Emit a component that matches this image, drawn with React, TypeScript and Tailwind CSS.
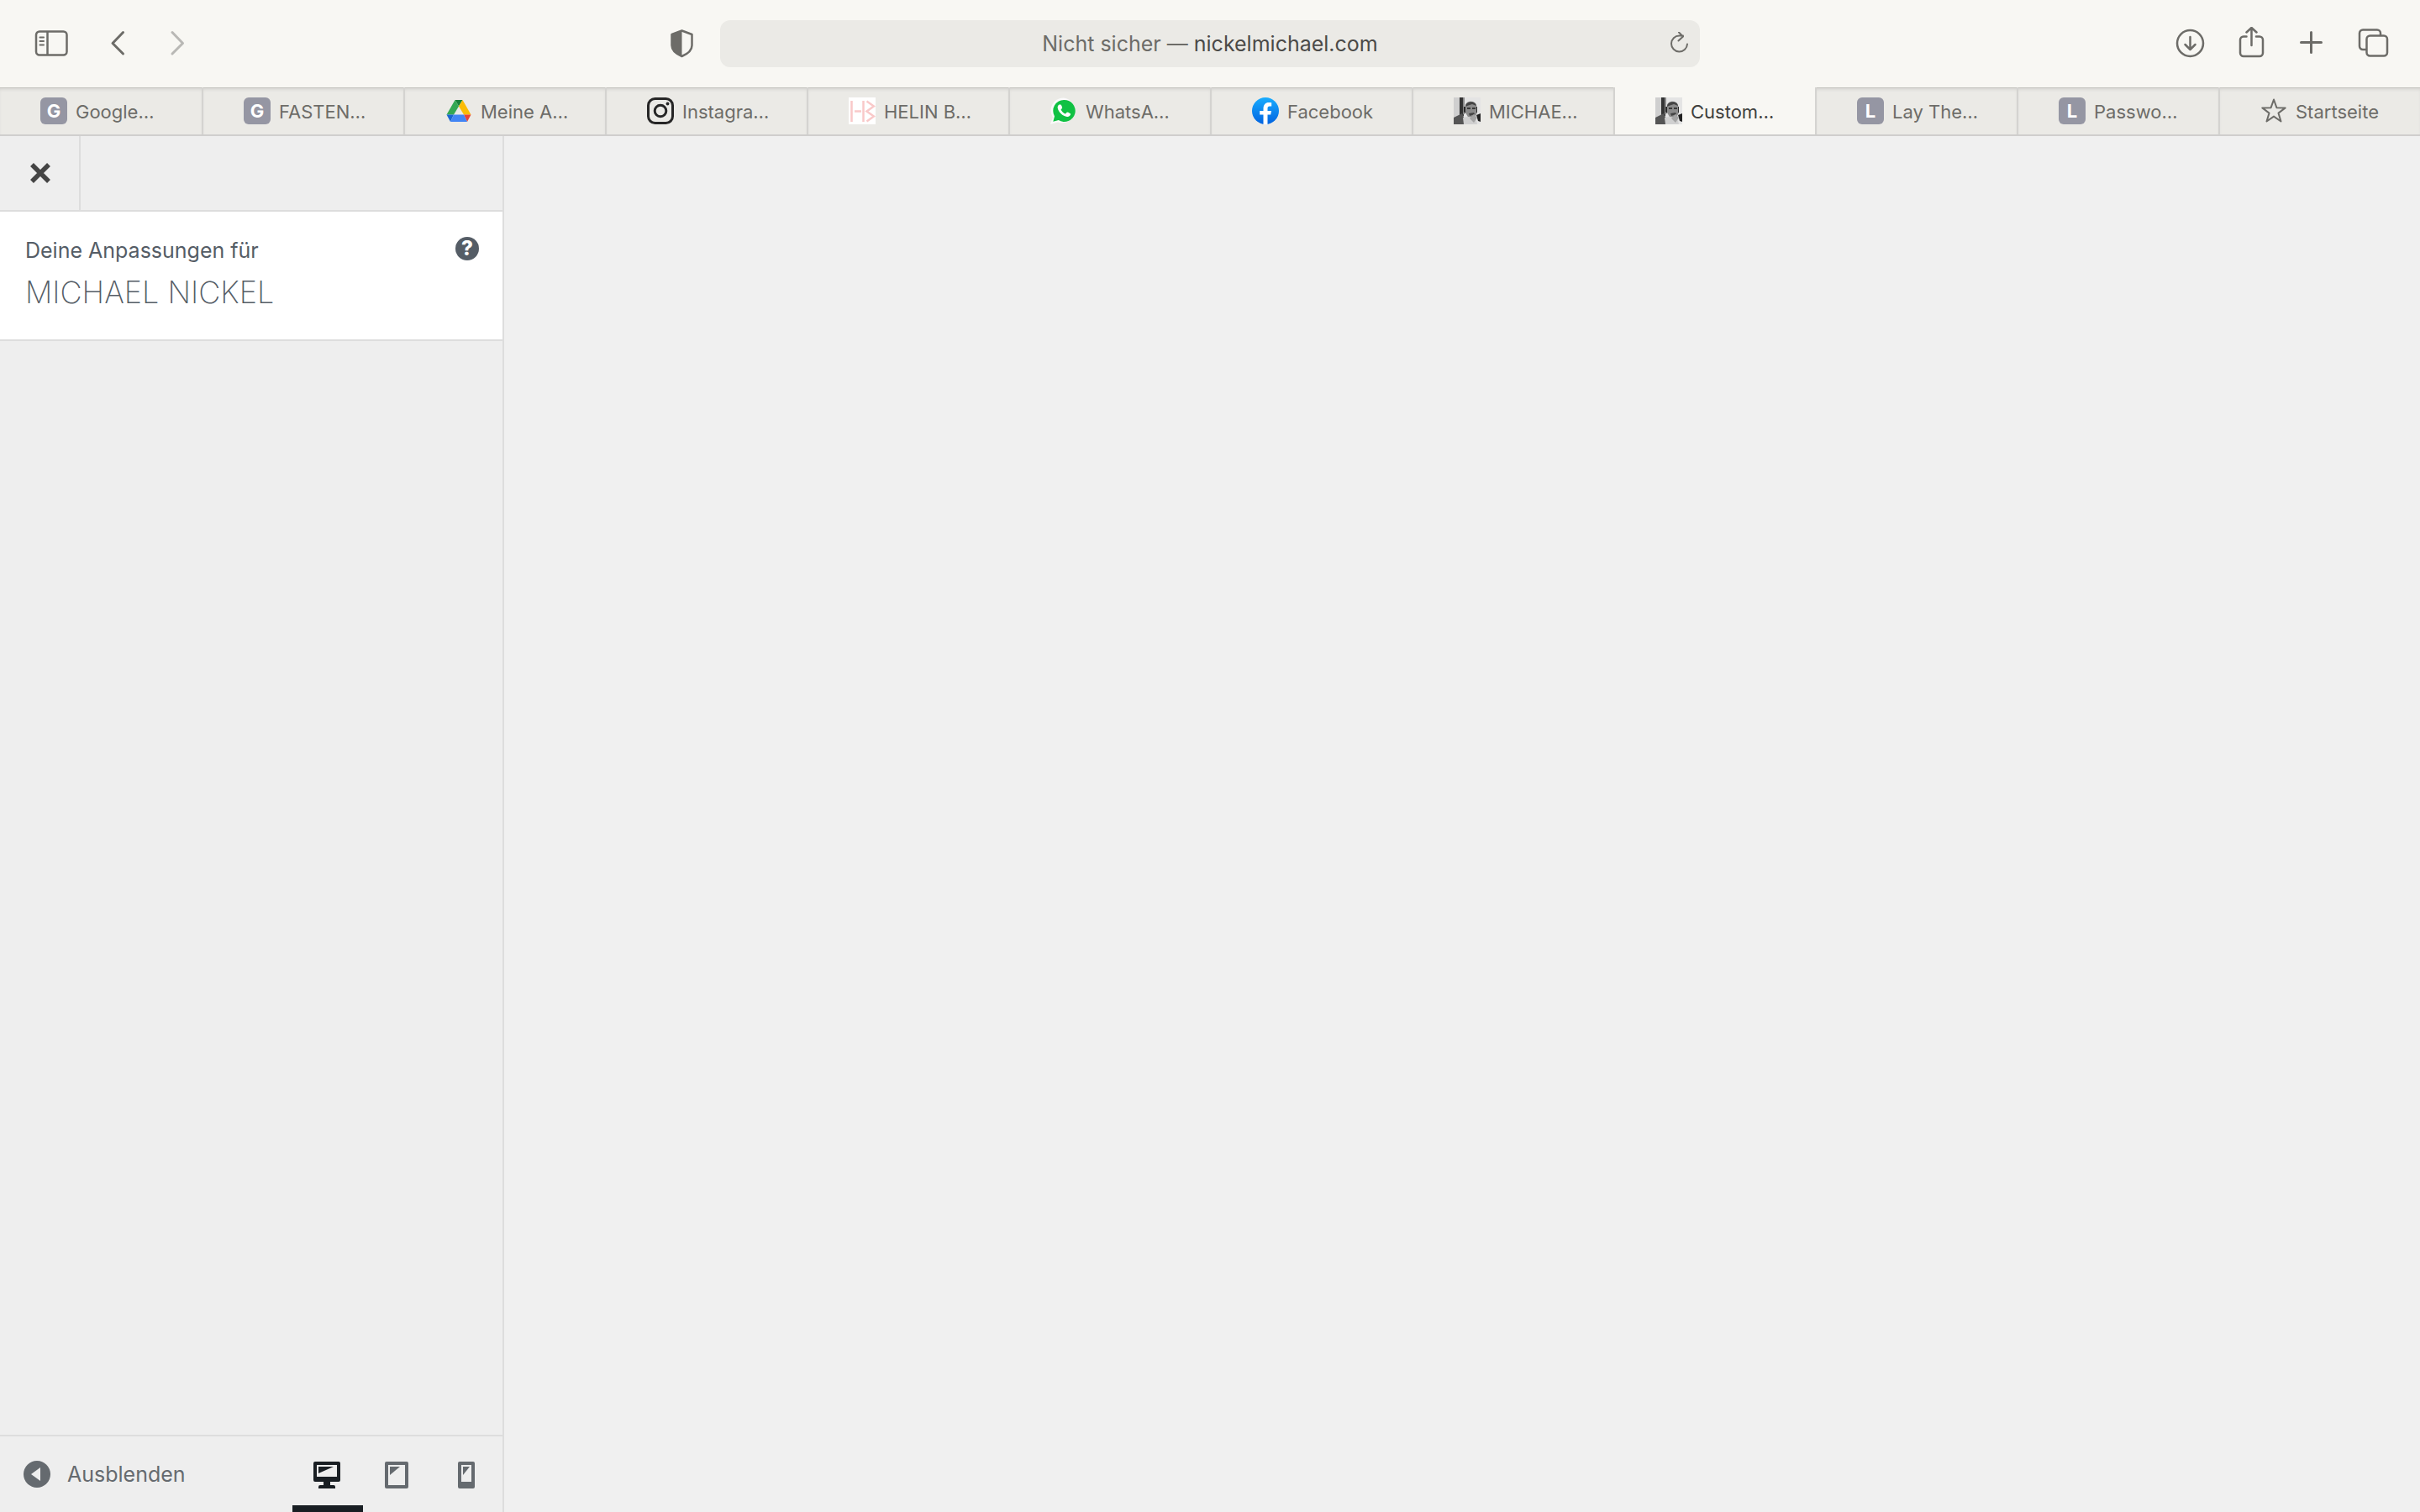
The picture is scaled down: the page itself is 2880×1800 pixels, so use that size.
import type { ReactNode } from 'react';

type Tab = {
  title: string;
  icon: ReactNode;
  active?: boolean;
};

function LetterIcon({ letter }: { letter: string }) {
  return (
    <span className="flex size-8 items-center justify-center rounded-md bg-[#9596a3] text-[22px] font-bold text-white">
      {letter}
    </span>
  );
}

function DriveIcon() {
  return (
    <svg className="size-8" viewBox="0 0 32 32">
      <path d="M11.5 3h9L16 10.5z" fill="#188038" />
      <path d="M11.5 3L16 10.5 10 20.5H1.500z" fill="#34a853" />
      <path d="M20.500 3L30.500 20.500H22L16 10.500z" fill="#fbbc04" />
      <path d="M1.500 20.500H10L6 29z" fill="#1967d2" />
      <path d="M22 20.500h8.500L26 29z" fill="#ea4335" />
      <path d="M10 20.500h12L26 29H6z" fill="#4285f4" />
    </svg>
  );
}

function InstagramIcon() {
  return (
    <svg className="size-8" viewBox="0 0 32 32" fill="none" stroke="#262626" strokeWidth="3">
      <rect x="1.500" y="1.500" width="29" height="29" rx="8" />
      <circle cx="16" cy="16" r="6.800" />
      <circle cx="24.500" cy="7.500" r="1.900" fill="#262626" stroke="none" />
    </svg>
  );
}

function HelinIcon() {
  return (
    <svg className="size-8" viewBox="0 0 32 32" fill="none" stroke="#f9c9c9" strokeWidth="2.500">
      <rect width="32" height="32" fill="#fff" stroke="none" />
      <path d="M3.500 4v25M17.500 4v25M7 16.500h8M21.500 4.500l8.500 6-8.500 6 8.500 6-8.500 6" />
    </svg>
  );
}

function WhatsAppIcon() {
  return (
    <svg className="size-8" viewBox="0 0 32 32">
      <path d="M16 0.500A15 15 0 0 0 3 23.500L0 32l9-2.500A15 15 0 1 0 16 0.500z" fill="#fafafa" />
      <path d="M16 3A13 13 0 0 0 5 22.500L3.300 28.700l6.500-1.700A13 13 0 1 0 16 3z" fill="#10c143" />
      <path
        d="M10.500 8.500c-1.500.8-2 2.500-1.800 4 .7 4.500 6 10 11.300 10.500 2 .2 4-1.200 4.200-3.200 0-.8-3.500-2.500-4.200-2.300-.8.300-1.500 2-2.200 1.900-2-.5-4.500-2.900-5.200-4.900.2-.7 1.700-1.500 1.600-2.300-.2-1.200-1.200-3.500-1.900-3.800z"
        fill="#fff"
      />
    </svg>
  );
}

function FacebookIcon() {
  return (
    <svg className="size-8" viewBox="0 0 32 32">
      <defs>
        <linearGradient id="facebook" x1="0" y1="0" x2="0" y2="1">
          <stop offset="0" stopColor="#18acfe" />
          <stop offset="1" stopColor="#0163e0" />
        </linearGradient>
      </defs>
      <circle cx="16" cy="16" r="16" fill="url(#facebook)" />
      <path d="M13.500 32V20.600H9.200V16h4.300v-2.500c0-5 2.500-7.500 6.500-7.500 1.300 0 2.500.1 3.200.3v4.200h-2.200c-2 0-2.500 1-2.500 2.600V16h4.500l-.8 4.600h-3.700V32z" fill="#fff" />
    </svg>
  );
}

function PortraitIcon() {
  return (
    <svg className="size-8" viewBox="0 0 32 32">
      <rect width="32" height="32" fill="#e4e4e4" />
      <path d="M0 0h7v24H0z" fill="#cfcfcf" />
      <path d="M7 0h4l1 22H7z" fill="#333" />
      <path d="M11 0h2v20h-2z" fill="#8a8a8a" />
      <path d="M0 24l10-5 6 13H0z" fill="#555" />
      <path d="M32 19l-5 2 2 7 3 1z" fill="#222" />
      <path d="M14 9c1-5 11-6 13 0l1 9-3 6-7 1-4-7z" fill="#8b8b8b" />
      <path d="M14 11c0-7 12-8 13-1l-5-2-6 2z" fill="#444" />
      <path d="M12 11h2v8l-2-2zM27 11h1v7h-1z" fill="#2b2b2b" />
      <path d="M16 12h4v2h-4zM22 12h4v2h-4z" fill="#3a3a3a" />
      <path d="M18 19l6-1 1 2-6 2z" fill="#444" />
      <path d="M11 24l6-1 9 1 2 8H12z" fill="#d0d0d0" />
      <path d="M19 25l5-5 4 4-4 6z" fill="#a4a4a4" />
    </svg>
  );
}

function StarIcon() {
  return (
    <svg className="size-8" viewBox="0 0 32 32" fill="none" stroke="#6d6c68" strokeWidth="2" strokeLinejoin="round">
      <path d="M16 2.500l3.400 9.700 10.300.2-8.200 6.200 3 9.900L16 22.600l-8.500 5.900 3-9.900-8.200-6.200 10.300-.2z" />
    </svg>
  );
}

const tabs: Tab[] = [
  { title: 'Google…', icon: <LetterIcon letter="G" /> },
  { title: 'FASTEN…', icon: <LetterIcon letter="G" /> },
  { title: 'Meine A…', icon: <DriveIcon /> },
  { title: 'Instagra…', icon: <InstagramIcon /> },
  { title: 'HELIN B…', icon: <HelinIcon /> },
  { title: 'WhatsA…', icon: <WhatsAppIcon /> },
  { title: 'Facebook', icon: <FacebookIcon /> },
  { title: 'MICHAE…', icon: <PortraitIcon /> },
  { title: 'Custom…', icon: <PortraitIcon />, active: true },
  { title: 'Lay The…', icon: <LetterIcon letter="L" /> },
  { title: 'Passwo…', icon: <LetterIcon letter="L" /> },
  { title: 'Startseite', icon: <StarIcon /> },
];

function Toolbar() {
  return (
    <header className="grid h-26 grid-cols-[1fr_1166px_1fr] items-center bg-[#f8f7f3] text-[#6d6c68]">
      <div className="flex items-center justify-between pr-8 pl-10">
        <div className="flex items-center gap-10">
          <button type="button" aria-label="Seitenleiste">
            <svg className="h-8 w-11" viewBox="0 0 44 32" fill="none" stroke="currentColor" strokeWidth="2.500">
              <rect x="3" y="1.500" width="36.500" height="28" rx="4" />
              <path d="M16.500 1.500v28" />
              <path d="M7.500 8.500h4.500M7.500 13h4.500M7.500 17.500h4.500" strokeWidth="2" strokeLinecap="round" />
            </svg>
          </button>
          <button type="button" aria-label="Zurück">
            <svg className="h-8 w-8" viewBox="0 0 32 32" fill="none" stroke="currentColor" strokeWidth="3" strokeLinecap="round" strokeLinejoin="round">
              <path d="M22.500 2.500L10 15.500 22.500 28" />
            </svg>
          </button>
          <button type="button" aria-label="Vorwärts" className="text-[#b9b8b5]">
            <svg className="h-8 w-8" viewBox="0 0 32 32" fill="none" stroke="currentColor" strokeWidth="3" strokeLinecap="round" strokeLinejoin="round">
              <path d="M9 2.500l12.500 13L9 28" />
            </svg>
          </button>
        </div>
        <button type="button" aria-label="Datenschutzbericht">
          <svg className="h-9 w-7" viewBox="0 0 28 36">
            <path d="M14.500 2.500L2.500 7v13c0 6 6 10.500 12 13 6-2.500 12-7 12-13V7z" fill="none" stroke="currentColor" strokeWidth="2.500" strokeLinejoin="round" />
            <path d="M14.500 2.500L2.500 7v13c0 6 6 10.500 12 13z" fill="currentColor" />
          </svg>
        </button>
      </div>

      <div className="flex h-14 items-center rounded-xl bg-[#ebeae6] px-2.5">
        <span className="w-7" />
        <p className="flex-1 text-center text-[25px] leading-8">
          Nicht sicher — <span className="text-[#4b4a48]">nickelmichael.com</span>
        </p>
        <button type="button" aria-label="Neu laden">
          <svg className="size-7" viewBox="0 0 28 28" fill="none" stroke="currentColor" strokeWidth="2" strokeLinecap="round" strokeLinejoin="round">
            <path d="M23 14.500A9.500 9.500 0 1 1 13.500 4.500h4.500M13 0.500l5 5-5.500 5" />
          </svg>
        </button>
      </div>

      <div className="flex items-center justify-end gap-9 pr-9">
        <button type="button" aria-label="Downloads">
          <svg className="size-9" viewBox="0 0 36 36" fill="none" stroke="currentColor" strokeWidth="2.500" strokeLinecap="round" strokeLinejoin="round">
            <circle cx="18.500" cy="17.500" r="15.500" />
            <path d="M18.500 10v14.500M12.500 19l6 6 6-6" />
          </svg>
        </button>
        <button type="button" aria-label="Teilen">
          <svg className="h-10 w-9" viewBox="0 0 36 40" fill="none" stroke="currentColor" strokeWidth="2.500" strokeLinecap="round" strokeLinejoin="round">
            <path d="M13.500 11.500H10a4 4 0 0 0-4 4V31a4 4 0 0 0 4 4h19a4 4 0 0 0 4-4V15.500a4 4 0 0 0-4-4h-4" />
            <path d="M19.500 22V1.500M13.500 6.500l6-5.500 6 5.500" />
          </svg>
        </button>
        <button type="button" aria-label="Neuer Tab">
          <svg className="size-9" viewBox="0 0 36 36" fill="none" stroke="currentColor" strokeWidth="3" strokeLinecap="round">
            <path d="M18.500 4.500v24M6.500 16.500h24" />
          </svg>
        </button>
        <button type="button" aria-label="Tabübersicht">
          <svg className="h-9 w-10" viewBox="0 0 40 36" fill="none" stroke="currentColor" strokeWidth="2.500">
            <rect x="12.500" y="8.500" width="24.500" height="24" rx="4" />
            <path d="M12.500 25H8a4 4 0 0 1-4-4V5.500a4 4 0 0 1 4-4h17a4 4 0 0 1 4 4v3" />
          </svg>
        </button>
      </div>
    </header>
  );
}

function TabBar() {
  return (
    <nav className="grid h-[58px] grid-cols-12 border-b-2 border-[#cfcecd]">
      {tabs.map((tab, index) => (
        <button
          key={index}
          type="button"
          className={`flex items-center gap-2.5 pl-12 text-[22px] ${index > 0 ? 'border-l-2 border-[#d4d3d0]' : ''} ${
            tab.active
              ? 'bg-[#f8f7f3] text-[#403f3d]'
              : 'bg-[#ebeae6] text-[#6d6c68] shadow-[inset_0_1px_0_#c5c4c0,inset_0_4px_4px_-2px_#cfcecb]'
          }`}
        >
          {tab.icon}
          <span className="pt-0.5 whitespace-nowrap">{tab.title}</span>
        </button>
      ))}
    </nav>
  );
}

function Sidebar() {
  return (
    <aside className="flex w-[600px] flex-col border-r-2 border-[#ddd] bg-[#eee]">
      <div className="flex h-[90px] border-b-2 border-[#ddd]">
        <button type="button" aria-label="Schließen" className="flex w-24 items-center justify-center border-r-2 border-[#ddd] pl-0.5 text-[#444]">
          <svg className="size-7" viewBox="0 0 28 28" stroke="currentColor" strokeWidth="5.500">
            <path d="M4 4l20 20M24 4L4 24" />
          </svg>
        </button>
      </div>

      <section className="flex h-[154px] items-start justify-between border-b-2 border-[#ddd] bg-white px-7 text-[#555d66]">
        <div className="pt-6.5 pl-0.5">
          <p className="text-[25px] leading-10">Deine Anpassungen für</p>
          <h1 className="text-[36px] leading-[60px] font-extralight">MICHAEL NICKEL</h1>
        </div>
        <button type="button" aria-label="Hilfe" className="mt-7.5 flex size-7 items-center justify-center rounded-full bg-[#555d66] text-[24px] font-extrabold text-white">
          ?
        </button>
      </section>

      <div className="flex-1" />

      <footer className="flex h-[92px] justify-between border-t-2 border-[#ddd] text-[#656a6f]">
        <button type="button" className="flex items-center gap-5 pl-7 text-[25px]">
          <svg className="size-8" viewBox="0 0 32 32">
            <circle cx="16" cy="16" r="16" fill="currentColor" />
            <path d="M20 8v16L9 16z" fill="#eee" />
          </svg>
          <span className="pt-0.5">Ausblenden</span>
        </button>
        <div className="flex">
          <button type="button" aria-label="Desktop-Ansicht" className="flex w-[84px] justify-center border-b-8 border-[#191e23] pt-7.5 pr-0.5 text-[#191e23]">
            <svg className="size-8" viewBox="0 0 32 32" fill="currentColor">
              <path fillRule="evenodd" d="M2 0h28a2 2 0 0 1 2 2v20a2 2 0 0 1-2 2H20v4h4a2 2 0 0 1 2 2v2H6v-2a2 2 0 0 1 2-2h4v-4H2a2 2 0 0 1-2-2V2a2 2 0 0 1 2-2zM4 4v14h24V4z" />
              <path d="M6 6h18L6 14z" />
            </svg>
          </button>
          <button type="button" aria-label="Tablet-Ansicht" className="flex w-[83px] justify-center pt-7.5 pr-[3px]">
            <svg className="h-8 w-7" viewBox="0 0 28 32" fill="currentColor">
              <path fillRule="evenodd" d="M2 0h24a2 2 0 0 1 2 2v28a2 2 0 0 1-2 2H2a2 2 0 0 1-2-2V2a2 2 0 0 1 2-2zM4 4v24h20V4z" />
              <path d="M6 6h12L6 16z" />
            </svg>
          </button>
          <button type="button" aria-label="Mobil-Ansicht" className="flex w-[83px] justify-center pt-7.5 pr-[3px]">
            <svg className="h-8 w-5" viewBox="0 0 20 32" fill="currentColor">
              <path fillRule="evenodd" d="M2 0h16a2 2 0 0 1 2 2v28a2 2 0 0 1-2 2H2a2 2 0 0 1-2-2V2a2 2 0 0 1 2-2zM4 4v20h12V4z" />
              <path d="M6 6h8L6 16z" />
            </svg>
          </button>
        </div>
      </footer>
    </aside>
  );
}

export default function App() {
  return (
    <div className="flex min-h-screen flex-col bg-[#f0f0f0] font-[Inter,sans-serif]">
      <Toolbar />
      <TabBar />
      <div className="flex flex-1">
        <Sidebar />
        <main className="flex-1" />
      </div>
    </div>
  );
}
